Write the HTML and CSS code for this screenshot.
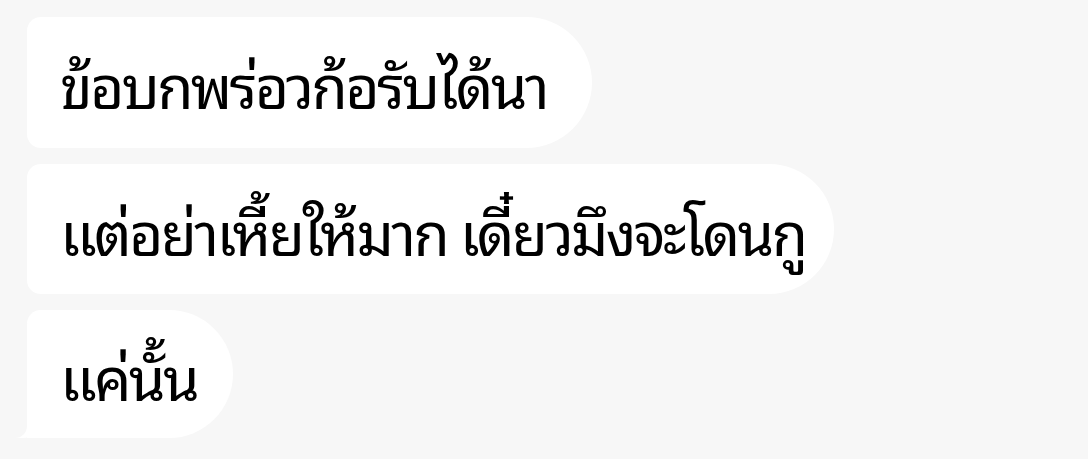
FILE: index.html
```html
<!DOCTYPE html>
<html lang="th">
<head>
    <meta charset="UTF-8">
    <meta name="viewport" content="width=device-width, initial-scale=1.0">
    <title>แชท</title>
    <link rel="stylesheet" href="styles.css">
</head>
<body>
    <div class="chat">
        <div class="bubble">ข้อบกพร่อวก้อรับได้นา</div>
        <div class="bubble bubble-mid">แต่อย่าเหี้ยให้มาก เดี๋ยวมึงจะโดนกู</div>
        <div class="bubble bubble-last">แค่นั้น</div>
    </div>
</body>
</html>
```

FILE: styles.css
```css
body {
    margin: 0;
    background-color: #f7f7f7;
    font-family: "Noto Sans Thai Looped", "Noto Sans", sans-serif;
}
.chat {
    display: flex;
    flex-direction: column;
    align-items: flex-start;
    gap: 16px;
    padding: 17px 0 0 27px;
}
.bubble {
    position: relative;
    height: 131px;
    display: flex;
    align-items: center;
    padding: 0 45px 0 33px;
    background-color: #fff;
    border-radius: 14px 66px 66px 14px;
    color: #000;
    font-size: 59px;
    font-stretch: 87.5%;
    letter-spacing: -2.7px;
    white-space: nowrap;
}
.bubble-mid {
    height: 130px;
    padding-right: 29px;
}
.bubble-last {
    height: 128px;
    padding-right: 36px;
    border-bottom-left-radius: 0;
}
/* little tail at the bottom left of the last bubble */
.bubble-last::before {
    content: "";
    position: absolute;
    left: -12px;
    bottom: 0;
    width: 24px;
    height: 26px;
    background-color: #fff;
    border-bottom-right-radius: 16px;
}
.bubble-last::after {
    content: "";
    position: absolute;
    left: -30px;
    bottom: 0;
    width: 30px;
    height: 26px;
    background-color: #f7f7f7;
    border-bottom-right-radius: 12px;
}
```
